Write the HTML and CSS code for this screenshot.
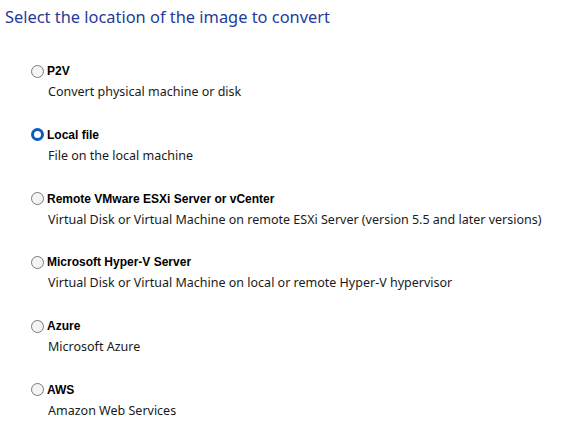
FILE: index.html
```html
<!DOCTYPE html>
<html>
<head>
<meta charset="utf-8">
<link rel="stylesheet" href="styles.css">
</head>
<body>
<div class="page">
  <h1 class="title">Select the location of the image to convert</h1>
  <div class="options">
    <div class="option">
      <div class="label-row"><span class="radio"></span><span class="label">P2V</span></div>
      <div class="desc">Convert physical machine or disk</div>
    </div>
    <div class="option">
      <div class="label-row"><span class="radio checked"></span><span class="label">Local file</span></div>
      <div class="desc">File on the local machine</div>
    </div>
    <div class="option">
      <div class="label-row"><span class="radio"></span><span class="label">Remote VMware ESXi Server or vCenter</span></div>
      <div class="desc">Virtual Disk or Virtual Machine on remote ESXi Server (version 5.5 and later versions)</div>
    </div>
    <div class="option">
      <div class="label-row"><span class="radio"></span><span class="label">Microsoft Hyper-V Server</span></div>
      <div class="desc">Virtual Disk or Virtual Machine on local or remote Hyper-V hypervisor</div>
    </div>
    <div class="option">
      <div class="label-row"><span class="radio"></span><span class="label">Azure</span></div>
      <div class="desc">Microsoft Azure</div>
    </div>
    <div class="option">
      <div class="label-row"><span class="radio"></span><span class="label">AWS</span></div>
      <div class="desc">Amazon Web Services</div>
    </div>
  </div>
</div>
</body>
</html>
```
FILE: styles.css
```css
html, body {
  margin: 0;
  padding: 0;
  background: #ffffff;
}
.page {
  padding: 6px 0 0 5px;
  font-family: "Noto Sans", "Liberation Sans", sans-serif;
}
.title {
  margin: 0;
  font-size: 16.4px;
  font-weight: normal;
  color: #1f3b9a;
  line-height: 22px;
}
.options {
  display: flex;
  flex-direction: column;
  gap: 27.8px;
  padding: 36px 0 0 26px;
}
.option {
  display: flex;
  flex-direction: column;
  gap: 6px;
}
.label-row {
  display: flex;
  align-items: center;
  gap: 3px;
  height: 14px;
}
.radio {
  box-sizing: border-box;
  width: 13px;
  height: 13px;
  border-radius: 50%;
  border: 1px solid #7a7a7a;
  background: #f4f4f4;
}
.radio.checked {
  border: 3.5px solid #0a5cbf;
  background: #ffffff;
}
.label {
  font-family: "Liberation Sans", Arial, sans-serif;
  font-weight: bold;
  font-size: 12px;
  color: #000;
}
.desc {
  padding-left: 17px;
  font-size: 12.5px;
  line-height: 16px;
  color: #1a1a1a;
}
```
